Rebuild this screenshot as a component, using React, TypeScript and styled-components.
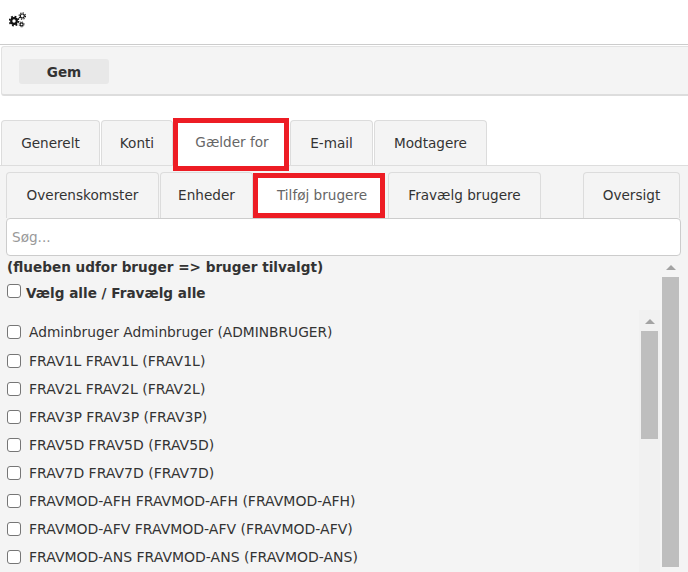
import React from 'react';
import styled, {createGlobalStyle} from 'styled-components';

const GlobalStyle = createGlobalStyle`
    html, body {
        margin: 0;
        padding: 0;
        height: 572px;
        overflow: hidden;
        background: #fff;
    }
    body {
        font-family: "DejaVu Sans", Verdana, sans-serif;
        font-size: 14px;
        color: #333;
    }
`;

const Page = styled.div`
    width: 688px;
    height: 572px;
    overflow: hidden;
`;

const Header = styled.div`
    height: 45px;
    box-sizing: border-box;
    padding: 11px 0 0 9px;
    border-bottom: 1px solid #ccc;
`;

const Toolbar = styled.div`
    height: 50px;
    box-sizing: border-box;
    margin: 1px 0 0 1px;
    padding: 12px 17px;
    background: #f4f4f4;
    border: 1px solid #e2e2e2;
    border-right: none;
    border-bottom: 2px solid #ddd;
    border-radius: 3px 0 0 3px;
`;

const SaveButton = styled.button`
    display: block;
    width: 90px;
    height: 25px;
    padding: 0;
    border: none;
    border-radius: 3px;
    background: #e8e8e8;
    color: #333;
    font-family: inherit;
    font-size: 13.6px;
    font-weight: 700;
`;

const TabRow = styled.div<{$top: number; $height: number; $left: number}>`
    display: flex;
    align-items: flex-end;
    position: relative;
    z-index: 1;
    height: ${(p) => p.$height}px;
    margin-top: ${(p) => p.$top}px;
    padding-left: ${(p) => p.$left}px;
    font-size: 13.6px;
`;

const Tab = styled.div<{$width: number; $gap?: number; $lift?: number}>`
    display: flex;
    align-items: center;
    justify-content: center;
    box-sizing: border-box;
    width: ${(p) => p.$width}px;
    height: 100%;
    margin-right: ${(p) => p.$gap ?? 1}px;
    padding-bottom: ${(p) => p.$lift ?? 0}px;
    background: #f4f4f4;
    border: 1px solid #dcdcdc;
    border-bottom: none;
    border-radius: 4px 4px 0 0;
    color: #333;
`;

const MarkedTab = styled.div<{$width: number; $height: number; $drop: number; $lift: number; $nudge: number; $gap?: number}>`
    display: flex;
    align-items: center;
    justify-content: center;
    box-sizing: border-box;
    flex: none;
    align-self: flex-end;
    width: ${(p) => p.$width}px;
    height: ${(p) => p.$height}px;
    margin-bottom: -${(p) => p.$drop}px;
    margin-right: ${(p) => p.$gap ?? 0}px;
    padding-bottom: ${(p) => p.$lift}px;
    padding-left: ${(p) => p.$nudge}px;
    background: #fff;
    border: 5px solid #ed1c24;
    color: #666;
`;

const Panel = styled.div`
    height: 407px;
    box-sizing: border-box;
    padding: 6px 7px 0 6px;
    background: #f4f4f4;
    border-top: 1px solid #ddd;
`;

const SearchInput = styled.input`
    display: block;
    width: 675px;
    height: 38px;
    box-sizing: border-box;
    padding: 0 5px;
    background: #fff;
    border: 1px solid #ccc;
    border-radius: 4px;
    font-family: inherit;
    font-size: 13.6px;

    &::placeholder {
        color: #999;
    }
`;

const Columns = styled.div`
    display: flex;
    height: 316px;
    overflow: hidden;
`;

const Body = styled.div`
    flex: 1;
    min-width: 0;
`;

const Hint = styled.div`
    margin: 2px 0 0 1px;
    height: 18px;
    line-height: 18px;
    font-size: 13.6px;
    font-weight: 700;
`;

const Check = styled.input.attrs({type: 'checkbox'})<{$gap: number}>`
    appearance: none;
    flex: none;
    box-sizing: border-box;
    width: 14px;
    height: 14px;
    margin: 0 ${(p) => p.$gap}px 0 1px;
    background: #fff;
    border: 1px solid #767676;
    border-radius: 3px;
`;

const SelectAll = styled.label`
    display: flex;
    align-items: center;
    height: 18px;
    margin-top: 8px;
    font-size: 13.6px;
    font-weight: 700;

    ${Check} {
        align-self: flex-start;
    }
`;

const ListArea = styled.div`
    display: flex;
    margin-top: 8px;
    height: 262px;
`;

const UserList = styled.div`
    flex: 1;
    min-width: 0;
    padding-top: 7px;
`;

const UserRow = styled.label`
    display: flex;
    align-items: center;
    height: 28px;

    &:first-child {
        height: 30px;
        font-size: 13.77px;
    }
`;

const ScrollTrack = styled.div<{$tint: string}>`
    flex: none;
    box-sizing: border-box;
    width: 21px;
    height: 100%;
    padding: 9px 2px 0;
    background: ${(p) => p.$tint};
`;

const ScrollArrow = styled.div`
    width: 0;
    height: 0;
    margin: 0 auto 7px;
    border-left: 5px solid transparent;
    border-right: 5px solid transparent;
    border-bottom: 5px solid #a3a3a3;
`;

const ScrollThumb = styled.div<{$height: number}>`
    height: ${(p) => p.$height}px;
    background: #bebebe;
`;

const GearIcon = () => (
    <svg width="18" height="18" viewBox="0 0 18 18" fill="none" style={{display: 'block'}}>
        <g stroke="#111">
            <circle cx="5" cy="10" r="2.8" strokeWidth="2.2" />
            <circle cx="5" cy="10" r="4.5" strokeWidth="1.8" strokeDasharray="1.77 1.77" />
            <circle cx="13.3" cy="5" r="2" strokeWidth="1.2" />
            <circle cx="13.3" cy="5" r="3.2" strokeWidth="1.1" strokeDasharray="1.25 1.26" />
            <circle cx="12.6" cy="13.4" r="1.5" strokeWidth="1.1" />
            <circle cx="12.6" cy="13.4" r="2.5" strokeWidth="0.9" strokeDasharray="1 0.96" />
        </g>
    </svg>
);

const users = [
    'Adminbruger Adminbruger (ADMINBRUGER)',
    'FRAV1L FRAV1L (FRAV1L)',
    'FRAV2L FRAV2L (FRAV2L)',
    'FRAV3P FRAV3P (FRAV3P)',
    'FRAV5D FRAV5D (FRAV5D)',
    'FRAV7D FRAV7D (FRAV7D)',
    'FRAVMOD-AFH FRAVMOD-AFH (FRAVMOD-AFH)',
    'FRAVMOD-AFV FRAVMOD-AFV (FRAVMOD-AFV)',
    'FRAVMOD-ANS FRAVMOD-ANS (FRAVMOD-ANS)',
];

const App = () => {
    return (
        <Page>
            <GlobalStyle />
            <Header>
                <GearIcon />
            </Header>
            <Toolbar>
                <SaveButton>Gem</SaveButton>
            </Toolbar>
            <TabRow $top={24} $height={45} $left={1}>
                <Tab $width={99}>Generelt</Tab>
                <Tab $width={72} $gap={0}>Konti</Tab>
                <MarkedTab $width={116} $height={53} $drop={6} $lift={6} $nudge={2} $gap={1}>Gælder for</MarkedTab>
                <Tab $width={83}>E-mail</Tab>
                <Tab $width={113}>Modtagere</Tab>
            </TabRow>
            <Panel>
                <TabRow $top={0} $height={46} $left={0}>
                    <Tab $width={153} $gap={1} $lift={2}>Overenskomster</Tab>
                    <Tab $width={93} $gap={0} $lift={2}>Enheder</Tab>
                    <MarkedTab $width={132} $height={45} $drop={0} $lift={2} $nudge={6} $gap={3}>Tilføj brugere</MarkedTab>
                    <Tab $width={153} $gap={42} $lift={2}>Fravælg brugere</Tab>
                    <Tab $width={97} $lift={2}>Oversigt</Tab>
                </TabRow>
                <SearchInput placeholder="Søg..." />
                <Columns>
                    <Body>
                        <Hint>(flueben udfor bruger =&gt; bruger tilvalgt)</Hint>
                        <SelectAll>
                            <Check $gap={5} />
                            Vælg alle / Fravælg alle
                        </SelectAll>
                        <ListArea>
                            <UserList>
                                {users.map((user) => (
                                    <UserRow key={user}>
                                        <Check $gap={8} />
                                        {user}
                                    </UserRow>
                                ))}
                            </UserList>
                            <ScrollTrack $tint="#f1f1f1">
                                <ScrollArrow />
                                <ScrollThumb $height={108} />
                            </ScrollTrack>
                        </ListArea>
                    </Body>
                    <ScrollTrack $tint="#f4f4f4">
                        <ScrollArrow />
                        <ScrollThumb $height={290} />
                    </ScrollTrack>
                </Columns>
            </Panel>
        </Page>
    );
};

export default App;
